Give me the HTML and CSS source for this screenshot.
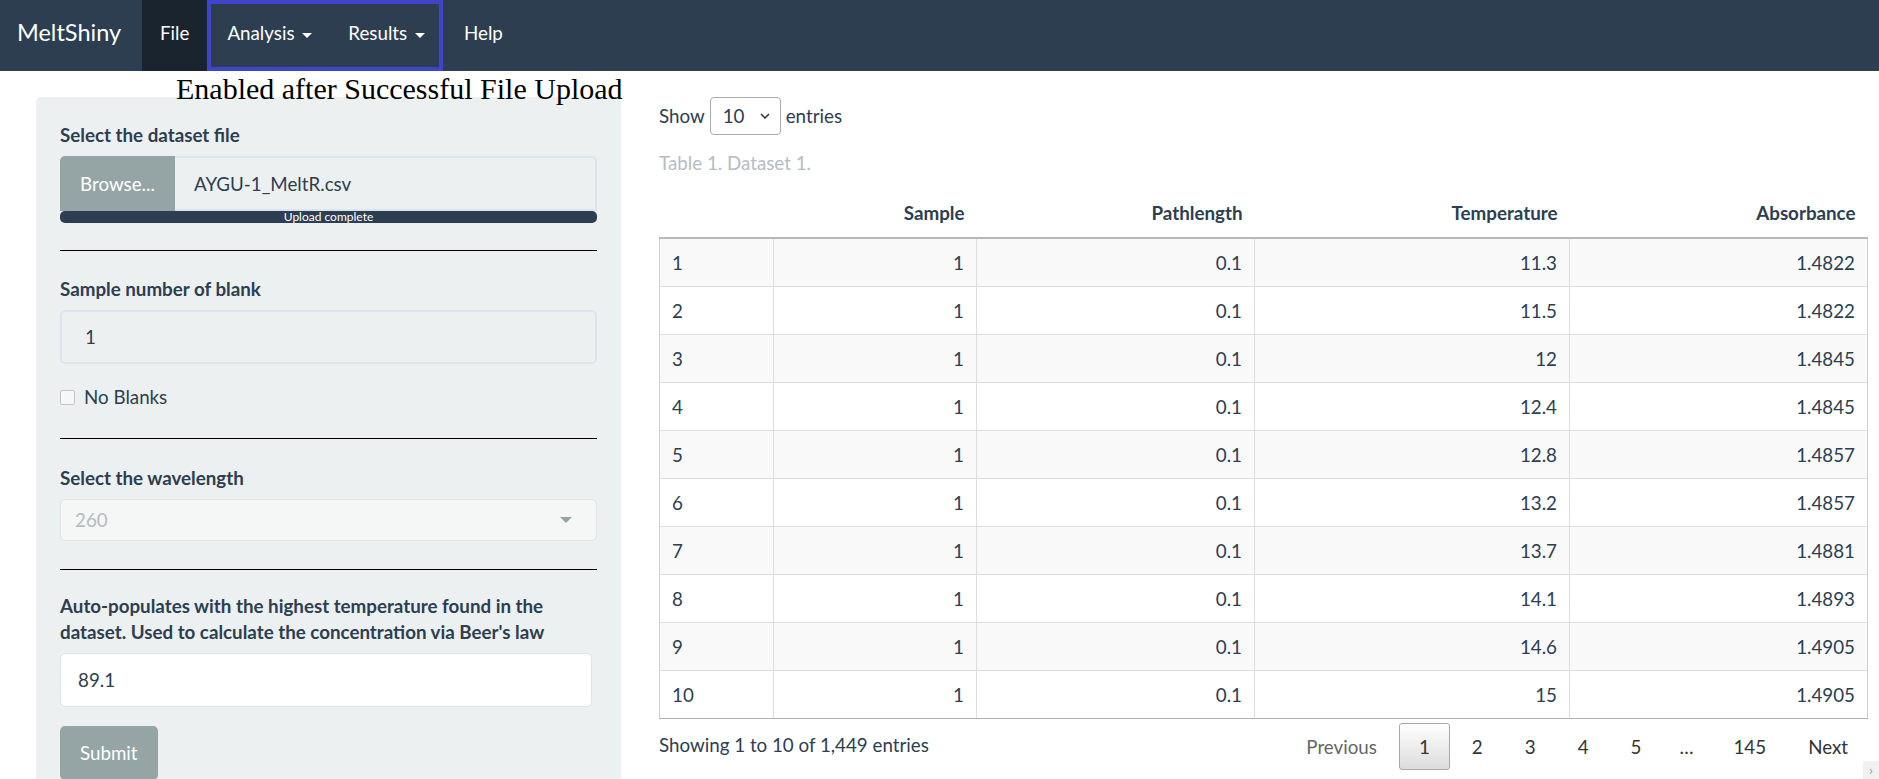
FILE: index.html
```html
<!DOCTYPE html>
<html lang="en">
<head>
<meta charset="utf-8">
<title>MeltShiny</title>
<link rel="stylesheet" href="styles.css">
</head>
<body>
<nav class="navbar">
  <a class="brand">MeltShiny</a>
  <div class="nav">
    <a class="nav-link active">File</a>
    <div class="nav-group">
      <a class="nav-link">Analysis <span class="caret"></span></a>
      <a class="nav-link">Results <span class="caret"></span></a>
    </div>
    <a class="nav-link nav-help">Help</a>
  </div>
</nav>
<div class="annotation">Enabled after Successful File Upload</div>

<div class="layout">
  <aside class="sidebar">
    <div class="group">
      <label class="control-label">Select the dataset file</label>
      <div class="file-input">
        <span class="btn-browse">Browse...</span>
        <span class="file-name">AYGU-1_MeltR.csv</span>
      </div>
      <div class="progress">Upload complete</div>
    </div>
    <hr class="rule rule-1">
    <div class="group">
      <label class="control-label">Sample number of blank</label>
      <div class="text-input disabled">1</div>
      <div class="checkbox-row"><span class="checkbox"></span><span>No Blanks</span></div>
    </div>
    <hr class="rule rule-2">
    <div class="group">
      <label class="control-label">Select the wavelength</label>
      <div class="select-input"><span>260</span><span class="select-caret"></span></div>
    </div>
    <hr class="rule rule-3">
    <div class="group">
      <label class="control-label">Auto-populates with the highest temperature found in the dataset. Used to calculate the concentration via Beer's law</label>
      <div class="text-input temp-input">89.1</div>
      <div class="btn-submit">Submit</div>
    </div>
  </aside>

  <main class="main">
    <div class="length-row">
      <span>Show</span>
      <span class="length-select">10
        <svg class="chev" width="10" height="6" viewBox="0 0 10 6"><path d="M1 1 L5 5 L9 1" fill="none" stroke="#333" stroke-width="1.5"/></svg>
      </span>
      <span>entries</span>
    </div>
    <div class="caption">Table 1. Dataset 1.</div>
    <table class="data">
      <colgroup>
        <col class="c0"><col class="c1"><col class="c2"><col class="c3"><col class="c4">
      </colgroup>
      <thead>
        <tr><th></th><th>Sample</th><th>Pathlength</th><th>Temperature</th><th>Absorbance</th></tr>
      </thead>
      <tbody>
        <tr><td class="idx">1</td><td>1</td><td>0.1</td><td>11.3</td><td>1.4822</td></tr>
        <tr><td class="idx">2</td><td>1</td><td>0.1</td><td>11.5</td><td>1.4822</td></tr>
        <tr><td class="idx">3</td><td>1</td><td>0.1</td><td>12</td><td>1.4845</td></tr>
        <tr><td class="idx">4</td><td>1</td><td>0.1</td><td>12.4</td><td>1.4845</td></tr>
        <tr><td class="idx">5</td><td>1</td><td>0.1</td><td>12.8</td><td>1.4857</td></tr>
        <tr><td class="idx">6</td><td>1</td><td>0.1</td><td>13.2</td><td>1.4857</td></tr>
        <tr><td class="idx">7</td><td>1</td><td>0.1</td><td>13.7</td><td>1.4881</td></tr>
        <tr><td class="idx">8</td><td>1</td><td>0.1</td><td>14.1</td><td>1.4893</td></tr>
        <tr><td class="idx">9</td><td>1</td><td>0.1</td><td>14.6</td><td>1.4905</td></tr>
        <tr><td class="idx">10</td><td>1</td><td>0.1</td><td>15</td><td>1.4905</td></tr>
      </tbody>
    </table>
    <div class="table-footer">
      <div class="info">Showing 1 to 10 of 1,449 entries</div>
      <div class="paginate">
        <span class="pg disabled">Previous</span>
        <span class="pg current">1</span>
        <span class="pg">2</span>
        <span class="pg">3</span>
        <span class="pg">4</span>
        <span class="pg">5</span>
        <span class="ellipsis">…</span>
        <span class="pg">145</span>
        <span class="pg">Next</span>
      </div>
    </div>
  </main>
</div>
<div class="scroll-btn">›</div>
</body>
</html>
```

FILE: styles.css
```css
html, body {
  margin: 0;
  padding: 0;
}
body {
  font-family: "Lato", "Open Sans", sans-serif;
  font-size: 18.75px;
  line-height: 26px;
  color: #2c3e50;
  background: #ffffff;
  width: 1879px;
  height: 779px;
  overflow: hidden;
  position: relative;
}

/* NAVBAR */
.navbar {
  display: flex;
  align-items: stretch;
  height: 71px;
  background: #2c3e50;
  padding-left: 17px;
}
.brand {
  color: #ffffff;
  font-size: 23.5px;
  line-height: 24px;
  padding: 20px 0 0 0;
  width: 125px;
}
.nav {
  display: flex;
  align-items: stretch;
}
.nav-group {
  display: flex;
  outline: 4px solid #3f44c9;
  outline-offset: -4px;
  padding-left: 2px;
}
.nav-link {
  display: block;
  color: #ffffff;
  padding: 21px 18px 0 18px;
  line-height: 24px;
}
.nav-link.active {
  background: #1a242f;
}
.nav-help {
  margin-left: 3px;
}
.caret {
  display: inline-block;
  width: 0;
  height: 0;
  margin-left: 3px;
  vertical-align: middle;
  border-top: 5px solid #ffffff;
  border-left: 5px solid transparent;
  border-right: 5px solid transparent;
}

/* ANNOTATION OVERLAY */
.annotation {
  position: absolute;
  left: 176px;
  top: 74px;
  font-family: "Liberation Serif", "Times New Roman", serif;
  font-size: 30px;
  line-height: 30px;
  color: #000000;
  z-index: 2;
  white-space: nowrap;
}

/* LAYOUT */
.layout {
  display: flex;
  align-items: flex-start;
  padding: 26px 11px 0 36px;
  gap: 38px;
}
.sidebar {
  width: 585px;
  flex: none;
  box-sizing: border-box;
  background: #ecf0f1;
  border-radius: 5px;
  padding: 25px 24px 40px 24px;
}
.main {
  flex: 1;
  min-width: 0;
}

/* SIDEBAR */
.control-label {
  display: block;
  font-weight: 700;
  line-height: 26px;
  margin-bottom: 8px;
}
.file-input {
  display: flex;
  height: 55px;
}
.btn-browse {
  width: 115px;
  flex: none;
  background: #95a5a6;
  color: #ffffff;
  border-radius: 5px 0 0 0;
  display: flex;
  align-items: center;
  justify-content: center;
}
.file-name {
  flex: 1;
  box-sizing: border-box;
  border: 2px solid #dce4ec;
  border-left: none;
  border-radius: 0 5px 0 0;
  padding-left: 19px;
  display: flex;
  align-items: center;
  background: #ecf0f1;
}
.progress {
  height: 12px;
  background: #2c3e50;
  border-radius: 5px;
  color: #ffffff;
  font-size: 12px;
  line-height: 12px;
  text-align: center;
}
.rule {
  border: none;
  border-top: 1px solid #000000;
  margin: 27px 0 25px 0;
  height: 0;
}
.rule-2 { margin: 28px 0 26px 0; }
.rule-3 { margin: 28px 0 23px 0; }

.text-input {
  box-sizing: border-box;
  height: 54px;
  border: 2px solid #dce4ec;
  border-radius: 5px;
  padding-left: 23px;
  display: flex;
  align-items: center;
  background: #ffffff;
}
.text-input.disabled {
  background: #ecf0f1;
  margin-top: 1px;
}
.checkbox-row {
  display: flex;
  align-items: center;
  margin-top: 20px;
  height: 26px;
  gap: 9px;
}
.checkbox {
  width: 13px;
  height: 13px;
  border: 1px solid #c4c4c4;
  border-radius: 2px;
  background: #f7f7f7;
}
.select-input {
  box-sizing: border-box;
  height: 42px;
  border: 1px solid #dde3e6;
  border-radius: 5px;
  background: #f5f6f6;
  color: #b4bcc2;
  padding: 0 24px 0 14px;
  display: flex;
  align-items: center;
  justify-content: space-between;
}
.select-caret {
  width: 0;
  height: 0;
  border-top: 6px solid #95a5a6;
  border-left: 6px solid transparent;
  border-right: 6px solid transparent;
}
.temp-input {
  width: 532px;
  padding-left: 17px;
  border-width: 1px;
}
.btn-submit {
  display: inline-block;
  margin-top: 19px;
  height: 54px;
  line-height: 54px;
  padding: 0 20px;
  background: #95a5a6;
  color: #ffffff;
  border-radius: 5px;
}

/* MAIN */
.length-row {
  display: flex;
  align-items: center;
  height: 38px;
  gap: 5px;
}
.length-select {
  box-sizing: border-box;
  width: 71px;
  height: 38px;
  border: 1px solid #aaaaaa;
  border-radius: 4px;
  padding: 0 10px 0 12px;
  display: flex;
  align-items: center;
  justify-content: space-between;
}
.chev { display: block; }
.caption {
  color: #b4bcc2;
  margin-top: 15px;
  line-height: 26px;
}
table.data {
  width: 100%;
  border-collapse: collapse;
  margin-top: 13px;
  table-layout: fixed;
}
.c0 { width: 114px; }
.c1 { width: 203px; }
.c2 { width: 278px; }
.c3 { width: 315px; }
.c4 { width: auto; }
table.data th {
  height: 48px;
  padding: 0 12px;
  text-align: right;
  font-weight: 700;
  border-bottom: 2px solid #b9b9b9;
  vertical-align: middle;
}
table.data td {
  height: 47px;
  padding: 0 12px;
  text-align: right;
  border: 1px solid #dddddd;
  vertical-align: middle;
}
table.data td.idx { text-align: left; }
table.data tbody tr:nth-child(odd) td { background: #f9f9f9; }
table.data tbody tr:last-child td { border-bottom: 1px solid #b0b0b0; }
table.data tbody tr td:first-child { border-left: 1px solid #d0d0d0; }
table.data tbody tr td:last-child { border-right: 1px solid #d0d0d0; }

.table-footer {
  display: flex;
  justify-content: space-between;
  align-items: center;
  margin-top: 4px;
}
.info {
  margin-top: -3px;
}
.paginate {
  display: flex;
  align-items: center;
}
.pg {
  box-sizing: border-box;
  height: 47px;
  line-height: 45px;
  padding: 0 19px;
  border: 1px solid transparent;
  border-radius: 3px;
  margin-left: 2px;
  color: #333333;
}
.pg.disabled { color: #666666; }
.pg.current {
  border: 1px solid #a9a9a9;
  background: linear-gradient(to bottom, #ffffff 0%, #dcdcdc 100%);
}
.ellipsis {
  padding: 0 18px;
  color: #333333;
}

.scroll-btn {
  position: absolute;
  right: 0;
  bottom: 0;
  width: 16px;
  height: 18px;
  background: #f1f1f1;
  color: #9a9a9a;
  font-size: 14px;
  line-height: 18px;
  text-align: center;
}
```
